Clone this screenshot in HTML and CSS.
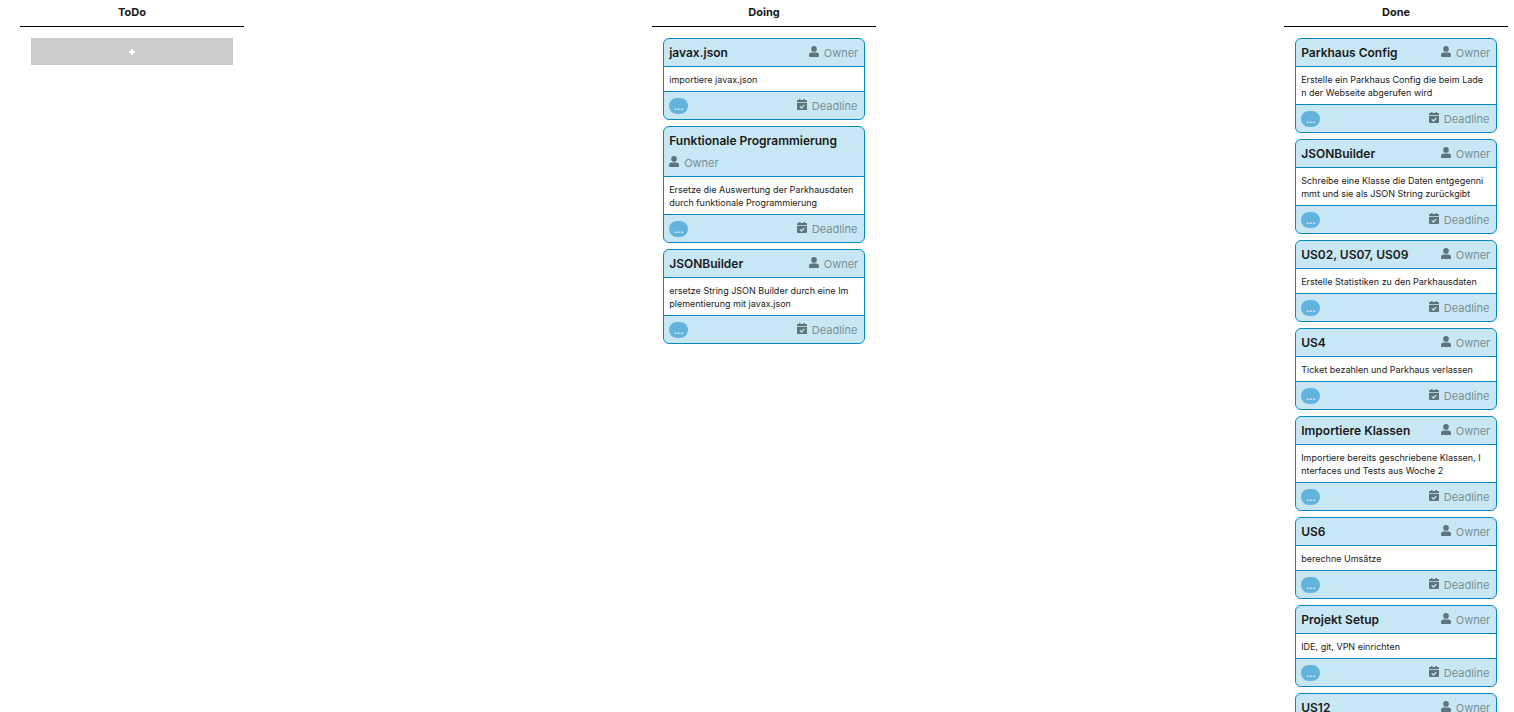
FILE: index.html
```
<!DOCTYPE html>
<html lang="de">
<head>
<meta charset="utf-8">
<title>Kanban Board</title>
<link rel="stylesheet" href="styles.css">
</head>
<body>
<svg class="sprite" aria-hidden="true">
  <symbol id="user" viewBox="0 0 10 11"><circle cx="5" cy="2.9" r="2.8"/><path d="M2.600 6.400h4.800A2.600 2.600 0 0 1 10 9v1.200a.8.8 0 0 1-.8.8H.8a.8.8 0 0 1-.8-.8V9a2.600 2.600 0 0 1 2.600-2.600z"/></symbol>
  <symbol id="calendar" viewBox="0 0 10 11"><path d="M2 0h1.500v1h3V0H8v1h1.200a.8.8 0 0 1 .8.8V3.200H0V1.800A.8.800 0 0 1 .8 1H2z"/><path d="M0 4.100h10v6a.9.900 0 0 1-.9.900H.9a.9.900 0 0 1-.9-.9z"/><path class="tick" d="M2.900 7.400l1.600 1.600 2.800-2.900"/></symbol>
</svg>
<main class="board">
  <section class="column">
    <h2 class="column-title">ToDo</h2>
    <button class="add" type="button" aria-label="Neue Karte"><svg class="plus" viewBox="0 0 6 6" aria-hidden="true"><path d="M2 0h2v2h2v2H4v2H2V4H0V2h2z"/></svg></button>
  </section>

  <section class="column">
    <h2 class="column-title">Doing</h2>
    <article class="card">
      <header class="card-row"><h3 class="card-title">javax.json</h3><label class="field"><svg class="icon"><use href="#user"/></svg><input class="owner" aria-label="Owner" placeholder="Owner"></label></header>
      <p class="card-text">importiere javax.json</p>
      <footer class="card-row"><button class="more" type="button">...</button><label class="field"><svg class="icon"><use href="#calendar"/></svg><input class="deadline" aria-label="Deadline" placeholder="Deadline"></label></footer>
    </article>
    <article class="card">
      <header class="card-row"><h3 class="card-title">Funktionale Programmierung</h3><label class="field"><svg class="icon"><use href="#user"/></svg><input class="owner" aria-label="Owner" placeholder="Owner"></label></header>
      <p class="card-text">Ersetze die Auswertung der Parkhausdaten durch funktionale Programmierung</p>
      <footer class="card-row"><button class="more" type="button">...</button><label class="field"><svg class="icon"><use href="#calendar"/></svg><input class="deadline" aria-label="Deadline" placeholder="Deadline"></label></footer>
    </article>
    <article class="card">
      <header class="card-row"><h3 class="card-title">JSONBuilder</h3><label class="field"><svg class="icon"><use href="#user"/></svg><input class="owner" aria-label="Owner" placeholder="Owner"></label></header>
      <p class="card-text">ersetze String JSON Builder durch eine Im<br>plementierung mit javax.json</p>
      <footer class="card-row"><button class="more" type="button">...</button><label class="field"><svg class="icon"><use href="#calendar"/></svg><input class="deadline" aria-label="Deadline" placeholder="Deadline"></label></footer>
    </article>
  </section>

  <section class="column">
    <h2 class="column-title">Done</h2>
    <article class="card">
      <header class="card-row"><h3 class="card-title">Parkhaus Config</h3><label class="field"><svg class="icon"><use href="#user"/></svg><input class="owner" aria-label="Owner" placeholder="Owner"></label></header>
      <p class="card-text">Erstelle ein Parkhaus Config die beim Lade<br>n der Webseite abgerufen wird</p>
      <footer class="card-row"><button class="more" type="button">...</button><label class="field"><svg class="icon"><use href="#calendar"/></svg><input class="deadline" aria-label="Deadline" placeholder="Deadline"></label></footer>
    </article>
    <article class="card">
      <header class="card-row"><h3 class="card-title">JSONBuilder</h3><label class="field"><svg class="icon"><use href="#user"/></svg><input class="owner" aria-label="Owner" placeholder="Owner"></label></header>
      <p class="card-text">Schreibe eine Klasse die Daten entgegenni<br>mmt und sie als JSON String zurückgibt</p>
      <footer class="card-row"><button class="more" type="button">...</button><label class="field"><svg class="icon"><use href="#calendar"/></svg><input class="deadline" aria-label="Deadline" placeholder="Deadline"></label></footer>
    </article>
    <article class="card">
      <header class="card-row"><h3 class="card-title">US02, US07, US09</h3><label class="field"><svg class="icon"><use href="#user"/></svg><input class="owner" aria-label="Owner" placeholder="Owner"></label></header>
      <p class="card-text">Erstelle Statistiken zu den Parkhausdaten</p>
      <footer class="card-row"><button class="more" type="button">...</button><label class="field"><svg class="icon"><use href="#calendar"/></svg><input class="deadline" aria-label="Deadline" placeholder="Deadline"></label></footer>
    </article>
    <article class="card">
      <header class="card-row"><h3 class="card-title">US4</h3><label class="field"><svg class="icon"><use href="#user"/></svg><input class="owner" aria-label="Owner" placeholder="Owner"></label></header>
      <p class="card-text">Ticket bezahlen und Parkhaus verlassen</p>
      <footer class="card-row"><button class="more" type="button">...</button><label class="field"><svg class="icon"><use href="#calendar"/></svg><input class="deadline" aria-label="Deadline" placeholder="Deadline"></label></footer>
    </article>
    <article class="card">
      <header class="card-row"><h3 class="card-title">Importiere Klassen</h3><label class="field"><svg class="icon"><use href="#user"/></svg><input class="owner" aria-label="Owner" placeholder="Owner"></label></header>
      <p class="card-text">Importiere bereits geschriebene Klassen, I<br>nterfaces und Tests aus Woche 2</p>
      <footer class="card-row"><button class="more" type="button">...</button><label class="field"><svg class="icon"><use href="#calendar"/></svg><input class="deadline" aria-label="Deadline" placeholder="Deadline"></label></footer>
    </article>
    <article class="card">
      <header class="card-row"><h3 class="card-title">US6</h3><label class="field"><svg class="icon"><use href="#user"/></svg><input class="owner" aria-label="Owner" placeholder="Owner"></label></header>
      <p class="card-text">berechne Umsätze</p>
      <footer class="card-row"><button class="more" type="button">...</button><label class="field"><svg class="icon"><use href="#calendar"/></svg><input class="deadline" aria-label="Deadline" placeholder="Deadline"></label></footer>
    </article>
    <article class="card">
      <header class="card-row"><h3 class="card-title">Projekt Setup</h3><label class="field"><svg class="icon"><use href="#user"/></svg><input class="owner" aria-label="Owner" placeholder="Owner"></label></header>
      <p class="card-text">IDE, git, VPN einrichten</p>
      <footer class="card-row"><button class="more" type="button">...</button><label class="field"><svg class="icon"><use href="#calendar"/></svg><input class="deadline" aria-label="Deadline" placeholder="Deadline"></label></footer>
    </article>
    <article class="card">
      <header class="card-row"><h3 class="card-title">US12</h3><label class="field"><svg class="icon"><use href="#user"/></svg><input class="owner" aria-label="Owner" placeholder="Owner"></label></header>
    </article>
  </section>
</main>
</body>
</html>
```
FILE: styles.css
```
* { box-sizing: border-box; }
body {
  margin: 0;
  background: #fff;
  color: #1a1a1a;
  font-family: Inter, "Liberation Sans", sans-serif;
}
.sprite { display: none; }
.board {
  display: flex;
  justify-content: space-between;
  align-items: flex-start;
  height: 100vh;
  padding: 0 6px 0 20px;
  overflow: hidden;
}
.column {
  display: flex;
  flex-direction: column;
  align-items: center;
  gap: 6px;
  width: 224px;
}
.column-title {
  width: 100%;
  margin: 0 0 5px;
  padding: 2px 0 4px;
  border-bottom: 1px solid #000;
  font-size: 11px;
  line-height: 20px;
  font-weight: 700;
  text-align: center;
}
.add {
  display: flex;
  align-items: center;
  justify-content: center;
  width: 90%;
  height: 27px;
  padding: 0;
  border: 0;
  background: #ccc;
}
.plus { width: 6px; height: 6px; fill: #fff; }
.card {
  width: 90%;
  overflow: hidden;
  border: 1px solid #0588c3;
  border-radius: 6px;
  background: #c8e7f4;
}
.card-row {
  display: flex;
  flex-wrap: wrap;
  align-items: center;
  justify-content: space-between;
  padding: 3px 5px 2px;
}
.card-title {
  margin: 0;
  font-size: 12px;
  line-height: 22px;
  font-weight: 600;
}
.card-text {
  margin: 0;
  padding: 6px 5px 5px;
  border: solid #0588c3;
  border-width: 1px 0;
  background: #fff;
  font-size: 9px;
  line-height: 13px;
  word-break: break-all;
}
.field {
  display: flex;
  align-items: center;
  gap: 5px;
  height: 22px;
}
.icon {
  width: 10px;
  height: 11px;
  margin-bottom: 3px;
  fill: #5e747d;
}
.tick { fill: none; stroke: #c8e7f4; stroke-width: 1.3; }
.owner, .deadline {
  height: 22px;
  padding: 0;
  border: 0;
  background: transparent;
  color: #1a1a1a;
  font: 11px/22px Inter, "Liberation Sans", sans-serif;
}
.owner { width: 35px; }
.deadline { width: 47px; }
.owner::placeholder, .deadline::placeholder { color: #7b8e96; opacity: 1; }
.more {
  width: 19px;
  height: 16px;
  padding: 0;
  border: 0;
  border-radius: 8px;
  background: #63b4dc;
  color: #fff;
  font: 11px/14px Inter, "Liberation Sans", sans-serif;
}
```
